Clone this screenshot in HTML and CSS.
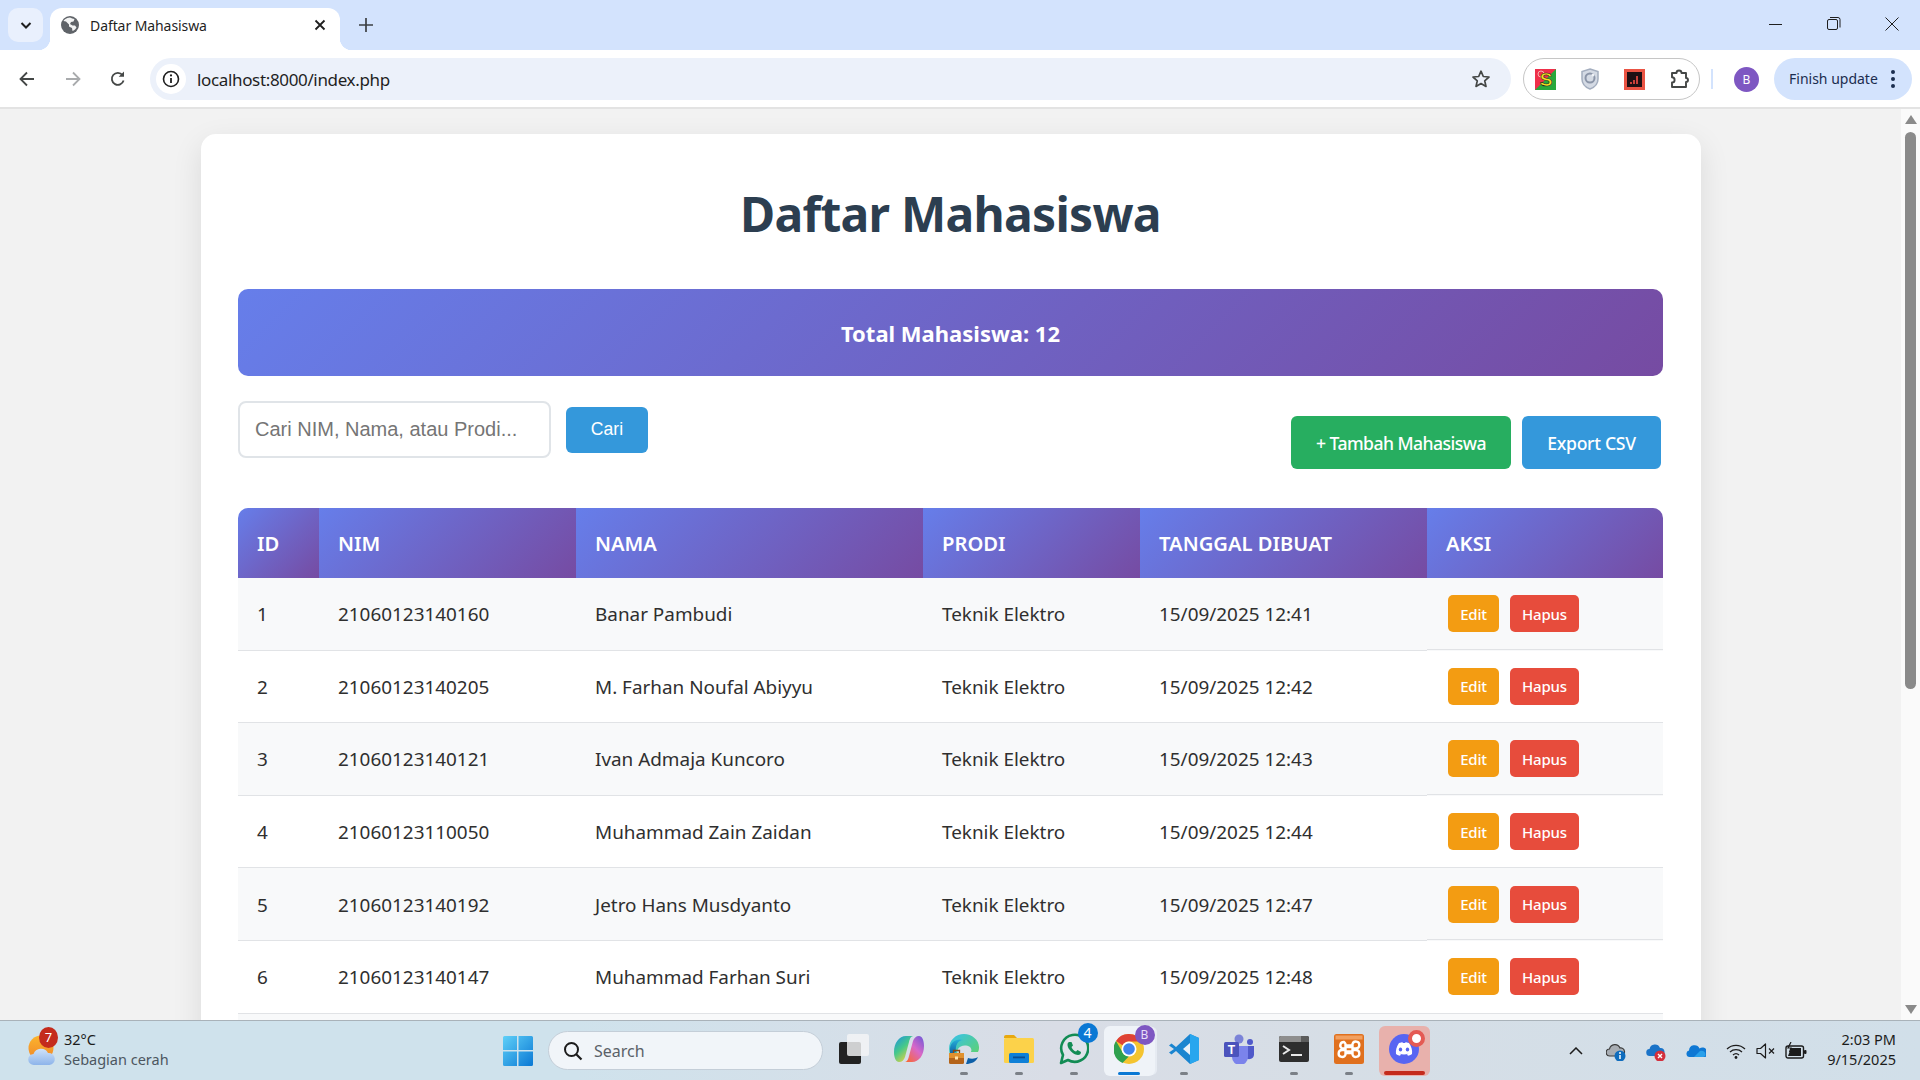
FILE: index.html
```html
<!DOCTYPE html>
<html lang="en">
<head>
  <meta charset="UTF-8" />
  <title>Daftar Mahasiswa</title>
  <link rel="stylesheet" href="styles.css">
</head>
<body>

  <!-- tab strip -->
  <header class="tabstrip">
    <div class="tab-search">
      <svg width="16" height="16" viewBox="0 0 16 16"><path d="M3.500 6 8 10.500 12.500 6" fill="none" stroke="#1f1f1f" stroke-width="2"/></svg>
    </div>
    <div class="tab">
      <svg width="18" height="18" viewBox="0 0 18 18"><circle cx="9" cy="9" r="9" fill="#5f6368"/><path d="M9 1.500c1.500 1 3 1 4.500 1.500l-1 2.500-2.500.5-1 2 2.500 1.500 2.500 0 1.500 2c-1 2-2.500 3-4 3.500l-.5-3-3-1.500 0-2-3-3-2.500-.5C3 4 5 2 9 1.500z" fill="#fff" opacity=".92"/></svg>
      <span class="tab-title">Daftar Mahasiswa</span>
      <svg class="tab-close" width="12" height="12" viewBox="0 0 12 12"><path d="M1.500 1.500 10.500 10.500M10.500 1.500 1.500 10.500" stroke="#1f1f1f" stroke-width="1.800"/></svg>
    </div>
    <svg class="tab-new" width="14" height="14" viewBox="0 0 14 14"><path d="M7 0v14M0 7h14" stroke="#3c4043" stroke-width="1.700"/></svg>
    <div class="window-controls">
      <svg width="14" height="14" viewBox="0 0 14 14"><path d="M0 7.500h13" stroke="#1f1f1f"/></svg>
      <svg width="14" height="14" viewBox="0 0 14 14"><rect x=".5" y="2.500" width="10" height="10" rx="1.500" fill="none" stroke="#1f1f1f"/><path d="M3 .5h8a2 2 0 0 1 2 2v8" fill="none" stroke="#1f1f1f"/></svg>
      <svg width="14" height="14" viewBox="0 0 14 14"><path d="M.5.5l13 13M13.500.5l-13 13" stroke="#1f1f1f"/></svg>
    </div>
  </header>

  <!-- toolbar -->
  <nav class="toolbar">
    <div class="nav-buttons">
      <svg width="18" height="18" viewBox="0 0 18 18"><path d="M16 9H3M9 2.500 2.500 9 9 15.500" fill="none" stroke="#444746" stroke-width="1.800"/></svg>
      <svg width="18" height="18" viewBox="0 0 18 18"><path d="M2 9h13M9 2.500 15.500 9 9 15.500" fill="none" stroke="#a9abad" stroke-width="1.800"/></svg>
      <svg width="18" height="18" viewBox="0 0 18 18"><path d="M14.600 10.500A6 6 0 1 1 13.500 5" fill="none" stroke="#444746" stroke-width="1.800"/><path d="M15 1.500v5.300H9.700z" fill="#444746"/></svg>
    </div>
    <div class="omnibox">
      <span class="site-info">
        <svg width="18" height="18" viewBox="0 0 18 18"><circle cx="9" cy="9" r="7.500" fill="none" stroke="#1f1f1f" stroke-width="1.600"/><path d="M9 8v5" stroke="#1f1f1f" stroke-width="1.800"/><circle cx="9" cy="5.400" r="1.100" fill="#1f1f1f"/></svg>
      </span>
      <span class="url">localhost:8000/index.php</span>
      <svg class="star" width="20" height="20" viewBox="0 0 20 20"><path d="M10 2.200l2.300 5.300 5.700.5-4.300 3.800 1.300 5.600L10 14.500l-5 2.900 1.300-5.600L2 8l5.700-.5z" fill="none" stroke="#444746" stroke-width="1.700" stroke-linejoin="round"/></svg>
    </div>
    <div class="extensions">
      <svg width="21" height="21" viewBox="0 0 21 21"><defs><linearGradient id="extS" x1="0" y1="0" x2="1" y2="1"><stop offset=".48" stop-color="#ef2f4a"/><stop offset=".52" stop-color="#27a83c"/></linearGradient></defs><rect width="21" height="21" fill="url(#extS)"/><circle cx="6" cy="5" r="3" fill="none" stroke="#f5b0b0"/><text x="11" y="17" class="ext-s">S</text></svg>
      <svg width="18" height="22" viewBox="0 0 18 22"><path d="M9 1l8 2.500v7.500c0 5-4 8.500-8 10-4-1.500-8-5-8-10V3.500z" fill="#d4dae4" stroke="#a4aebf" stroke-width="1.500"/><circle cx="9" cy="10" r="4.500" fill="none" stroke="#8b95a8" stroke-width="2"/><circle cx="12" cy="7" r="1.500" fill="#eef1f6"/></svg>
      <svg width="21" height="21" viewBox="0 0 21 21"><rect width="21" height="21" fill="#ea5444"/><rect x="3" y="3" width="15" height="15" fill="#1e1014"/><path d="M6 13h2v2H6zM9 11h2v4H9zM12 7h2v8h-2z" fill="#c8403a"/></svg>
      <svg width="22" height="22" viewBox="0 0 22 22"><path d="M3 5h4.500a2.500 2.500 0 0 1 5 0H17v5a2 2 0 0 1 0 4v5H3v-4.500a2.600 2.600 0 0 0 0-5.200z" fill="none" stroke="#444746" stroke-width="1.900" stroke-linejoin="round"/></svg>
    </div>
    <span class="toolbar-sep"></span>
    <span class="avatar">B</span>
    <div class="update-pill">
      <span class="update-label">Finish update</span>
      <svg width="4" height="18" viewBox="0 0 4 18"><circle cx="2" cy="2" r="2" fill="#1b2d4f"/><circle cx="2" cy="9" r="2" fill="#1b2d4f"/><circle cx="2" cy="16" r="2" fill="#1b2d4f"/></svg>
    </div>
  </nav>

  <!-- page -->
  <div class="viewport">
    <main class="page">
      <section class="card">
        <h1>Daftar Mahasiswa</h1>
        <div class="stats">Total Mahasiswa: 12</div>

        <div class="controls">
          <form class="search-form">
            <input type="text" placeholder="Cari NIM, Nama, atau Prodi...">
            <button type="button" class="btn-search">Cari</button>
          </form>
          <div class="control-actions">
            <a class="btn btn-add">+ Tambah Mahasiswa</a>
            <a class="btn btn-export">Export CSV</a>
          </div>
        </div>

        <table>
          <colgroup>
            <col class="col-id"><col class="col-nim"><col class="col-nama"><col class="col-prodi"><col class="col-date"><col class="col-aksi">
          </colgroup>
          <thead>
            <tr><th>ID</th><th>NIM</th><th>Nama</th><th>Prodi</th><th>Tanggal Dibuat</th><th>Aksi</th></tr>
          </thead>
          <tbody>
            <tr><td>1</td><td>21060123140160</td><td>Banar Pambudi</td><td>Teknik Elektro</td><td>15/09/2025 12:41</td><td class="cell-actions"><a class="mini mini-edit">Edit</a><a class="mini mini-del">Hapus</a></td></tr>
            <tr><td>2</td><td>21060123140205</td><td>M. Farhan Noufal Abiyyu</td><td>Teknik Elektro</td><td>15/09/2025 12:42</td><td class="cell-actions"><a class="mini mini-edit">Edit</a><a class="mini mini-del">Hapus</a></td></tr>
            <tr><td>3</td><td>21060123140121</td><td>Ivan Admaja Kuncoro</td><td>Teknik Elektro</td><td>15/09/2025 12:43</td><td class="cell-actions"><a class="mini mini-edit">Edit</a><a class="mini mini-del">Hapus</a></td></tr>
            <tr><td>4</td><td>21060123110050</td><td>Muhammad Zain Zaidan</td><td>Teknik Elektro</td><td>15/09/2025 12:44</td><td class="cell-actions"><a class="mini mini-edit">Edit</a><a class="mini mini-del">Hapus</a></td></tr>
            <tr><td>5</td><td>21060123140192</td><td>Jetro Hans Musdyanto</td><td>Teknik Elektro</td><td>15/09/2025 12:47</td><td class="cell-actions"><a class="mini mini-edit">Edit</a><a class="mini mini-del">Hapus</a></td></tr>
            <tr><td>6</td><td>21060123140147</td><td>Muhammad Farhan Suri</td><td>Teknik Elektro</td><td>15/09/2025 12:48</td><td class="cell-actions"><a class="mini mini-edit">Edit</a><a class="mini mini-del">Hapus</a></td></tr>
            <tr><td></td><td></td><td></td><td></td><td></td><td></td></tr>
          </tbody>
        </table>
      </section>
    </main>
    <aside class="scrollbar">
      <svg width="12" height="9" viewBox="0 0 12 9"><path d="M6 0l6 9H0z" fill="#8a8a8a"/></svg>
      <div class="thumb"></div>
      <svg class="arrow-down" width="12" height="9" viewBox="0 0 12 9"><path d="M6 9l6-9H0z" fill="#8a8a8a"/></svg>
    </aside>
  </div>

  <!-- windows taskbar -->
  <footer class="taskbar">
    <div class="weather">
      <span class="weather-icon">
        <svg width="30" height="32" viewBox="0 0 30 32"><defs><linearGradient id="sun" x1="0" y1="0" x2="0" y2="1"><stop offset="0" stop-color="#fbb52d"/><stop offset="1" stop-color="#f0862a"/></linearGradient><linearGradient id="cloud" x1="0" y1="0" x2="0" y2="1"><stop offset="0" stop-color="#cfe2fa"/><stop offset="1" stop-color="#8db4ea"/></linearGradient></defs><circle cx="14" cy="14" r="12.500" fill="url(#sun)"/><path d="M7 31a5.500 5.500 0 0 1-.5-11A8 8 0 0 1 21 19a6 6 0 0 1 1.500 12z" fill="url(#cloud)"/></svg>
        <b class="weather-badge">7</b>
      </span>
      <div class="weather-text">
        <span>32°C</span>
        <span class="weather-desc">Sebagian cerah</span>
      </div>
    </div>

    <div class="task-center">
      <svg class="win-logo" width="30" height="30" viewBox="0 0 30 30"><defs><linearGradient id="win" x1="0" y1="0" x2="1" y2="1"><stop offset="0" stop-color="#5fd0f8"/><stop offset="1" stop-color="#0a78d4"/></linearGradient></defs><path d="M0 1.500a1.500 1.500 0 0 1 1.500-1.500H14v14H0zM15.500 0H28.500A1.500 1.500 0 0 1 30 1.500V14H15.500zM0 15.500h14V30H1.500A1.500 1.500 0 0 1 0 28.500zM15.500 15.500H30V28.500a1.500 1.500 0 0 1-1.500 1.500H15.500z" fill="url(#win)"/></svg>
      <div class="task-search">
        <svg width="20" height="20" viewBox="0 0 20 20"><circle cx="8.500" cy="8.500" r="6.500" fill="none" stroke="#1c1c1c" stroke-width="2"/><path d="M13 13l5.500 5.500" stroke="#1c1c1c" stroke-width="2.200"/></svg>
        <span>Search</span>
      </div>

      <div class="task-apps">
        <!-- task view -->
        <span class="app">
          <svg width="30" height="30" viewBox="0 0 30 30"><rect y="8" width="22" height="22" rx="2" fill="#222"/><rect x="8" y="0" width="22" height="22" rx="2" fill="#f4f5f7" opacity=".82"/></svg>
        </span>
        <!-- copilot -->
        <span class="app">
          <svg width="30" height="28" viewBox="0 0 30 28"><defs><linearGradient id="copL" x1="0" y1="0" x2=".7" y2="1"><stop offset="0" stop-color="#1a8fe3"/><stop offset=".5" stop-color="#46c98a"/><stop offset="1" stop-color="#f8d23a"/></linearGradient><linearGradient id="copR" x1="1" y1="0" x2=".2" y2="1"><stop offset="0" stop-color="#6a58d8"/><stop offset=".5" stop-color="#d868c8"/><stop offset="1" stop-color="#f8683a"/></linearGradient></defs><path d="M18 27h-8c3 0 4-2 5-6l4-15c1-3 3-5 6-5 3 0 5 4 5 10 0 9-5 16-12 16z" fill="url(#copR)"/><path d="M12 1h8c-3 0-4 2-5 6l-4 15c-1 3-3 5-6 5C2 27 0 23 0 17 0 8 5 1 12 1z" fill="url(#copL)"/></svg>
        </span>
        <!-- edge work -->
        <span class="app has-pip">
          <svg width="30" height="30" viewBox="0 0 30 30"><defs><linearGradient id="edgeB" x1="0" y1="0" x2="0" y2="1"><stop offset="0" stop-color="#27b0d8"/><stop offset="1" stop-color="#0c5fa8"/></linearGradient><linearGradient id="edgeG" x1="0" y1="0" x2="1" y2="1"><stop offset="0" stop-color="#35c1f1"/><stop offset="1" stop-color="#66d45c"/></linearGradient></defs><path d="M15 0C7 0 0 6 0 15c0 5 2 9 6 12h8C9 24 7 19 9 15c2-3 7-5 12-2 1 1 2 3 1 5h7c1-2 1-4 1-5C30 6 23 0 15 0z" fill="url(#edgeG)"/><path d="M1 15C1 8 8 4 14 6c-5 0-8 5-7 12l-6 2z" fill="url(#edgeB)"/><path d="M17 30c5 0 10-2 12-7-3 2-7 2-10 1z" fill="#0c5fa8"/><rect x="0" y="19" width="15" height="11" rx="1.500" fill="#b4641a"/><rect x="0" y="19" width="15" height="5" fill="#e0912e"/><rect x="6" y="22.500" width="3" height="3" fill="#ffe3a8"/><path d="M4.500 19v-2.500h6V19" fill="none" stroke="#8a4a10" stroke-width="1.300"/></svg>
        </span>
        <!-- file explorer -->
        <span class="app has-pip">
          <svg width="30" height="30" viewBox="0 0 30 30"><path d="M0 3a2 2 0 0 1 2-2h8l3 3h-13z" fill="#e8a80e"/><rect y="4" width="30" height="25" rx="1.500" fill="#fcd24a"/><rect x="5" y="19" width="20" height="10" rx="1.500" fill="#0f80d7"/><rect x="9" y="22.500" width="12" height="1.800" fill="#0a4f92"/></svg>
        </span>
        <!-- whatsapp -->
        <span class="app has-pip">
          <svg width="30" height="32" viewBox="0 0 30 32"><path d="M2 30l2-8A13.500 13.500 0 1 1 9 27z" fill="#f4f8f6" fill-opacity=".25" stroke="#128c54" stroke-width="2.600" stroke-linejoin="round"/><path d="M10 9c-2 1-2 4 0 7s6 6 9 6c2 0 3-1 3-3l-3.500-2-1.500 1.500c-2-.5-3.500-2-4.500-4.500l1.500-1.500-1.500-3.500z" fill="#128c54"/></svg>
          <b class="badge-count">4</b>
        </span>
        <!-- chrome -->
        <span class="app app-active">
          <svg width="30" height="30" viewBox="0 0 30 30"><circle cx="15" cy="15" r="15" fill="#f4c430"/><path d="M15 0a15 15 0 0 1 13 7.500H15a7.500 7.500 0 0 0-6.500 3.700L2 7A15 15 0 0 1 15 0z" fill="#df4236"/><path d="M2 7l6.500 11.300a7.500 7.500 0 0 0 6.500 4L8.500 29A15 15 0 0 1 2 7z" fill="#2fa14f"/><circle cx="15" cy="15" r="7.500" fill="#fff"/><circle cx="15" cy="15" r="5.800" fill="#3f83ee"/></svg>
          <b class="badge-profile">B</b>
        </span>
        <!-- vs code -->
        <span class="app has-pip">
          <svg width="30" height="30" viewBox="0 0 30 30"><path d="M21 0l9 4v22l-9 4L7 17l-4.500 3.500L0 18.500 5 15 0 11.500 2.500 9.500 7 13z" fill="#1a85d0"/><path d="M21 0l9 4v22l-9 4z" fill="#28a6ee"/><path d="M21 9l-7 6 7 6z" fill="#e8f1f9"/></svg>
        </span>
        <!-- teams -->
        <span class="app">
          <svg width="30" height="30" viewBox="0 0 30 30"><circle cx="15" cy="5" r="4.500" fill="#7b83d8"/><circle cx="26" cy="8" r="3" fill="#5059c9"/><path d="M21 12h9v9a5 5 0 0 1-9 2z" fill="#5059c9"/><path d="M8 12h16v11a8 8 0 0 1-16 0z" fill="#7b83eb"/><rect x="0" y="8" width="15" height="15" rx="1.500" fill="#4b53bc"/><text x="7.500" y="20" class="teams-t">T</text></svg>
        </span>
        <!-- terminal -->
        <span class="app has-pip">
          <svg width="30" height="26" viewBox="0 0 30 26"><rect width="30" height="26" rx="2" fill="#2e2e2e"/><path d="M0 2a2 2 0 0 1 2-2h20v6H0z" fill="#8e8e8e"/><path d="M22 0h6a2 2 0 0 1 2 2v4h-8z" fill="#5c5c5c"/><path d="M4 10l6 4-6 4" fill="none" stroke="#e8e8e8" stroke-width="2"/><path d="M12 19h11" stroke="#e8e8e8" stroke-width="2"/></svg>
        </span>
        <!-- xampp -->
        <span class="app has-pip">
          <svg width="30" height="30" viewBox="0 0 30 30"><rect width="30" height="30" rx="2.500" fill="#e0701e"/><rect x="1.500" y="1.500" width="27" height="4" fill="#f2a060"/><path d="M10 8a3.500 3.500 0 0 0-2 6.500h3.500V13l7 0v1.500H22A3.500 3.500 0 1 0 18.500 10v1.500h-7V10A3.500 3.500 0 0 0 10 8zM11.500 16v1.500h7V16H22a3.500 3.500 0 1 1-3.500 4.500V19h-7v1.500A3.500 3.500 0 1 1 8 16z" fill="none" stroke="#fff" stroke-width="2.400"/></svg>
        </span>
        <!-- discord -->
        <span class="app app-alert">
          <svg width="30" height="30" viewBox="0 0 30 30"><circle cx="15" cy="15" r="15" fill="#5865f2"/><path d="M10 9c1.500-.6 3-.8 3.500-.8l.4.8h2.200l.4-.8c.5 0 2 .2 3.500.8 2.500 3.500 3.500 7.500 3 11-1.500 1-3 1.500-4 1.700l-1-1.500c.7-.2 1.200-.5 1.700-.8-3 1.300-6.400 1.300-9.400 0 .5.3 1 .6 1.700.8l-1 1.500c-1-.2-2.500-.7-4-1.700-.5-3.500.5-7.500 3-11z" fill="#fff"/><ellipse cx="11.500" cy="15.500" rx="1.700" ry="1.900" fill="#5865f2"/><ellipse cx="18.500" cy="15.500" rx="1.700" ry="1.900" fill="#5865f2"/></svg>
          <i class="alert-dot"></i>
        </span>
      </div>
    </div>

    <div class="tray">
      <svg class="tray-chevron" width="14" height="8" viewBox="0 0 14 8"><path d="M1 7l6-6 6 6" fill="none" stroke="#1c1c1c" stroke-width="1.500"/></svg>
      <span class="tray-icon">
        <svg width="20" height="20" viewBox="0 0 20 20"><path d="M4 15a3.500 3.500 0 0 1-.5-7A5.500 5.500 0 0 1 14 7a4 4 0 0 1 1 8z" fill="#a8adb3" stroke="#3c3c3c" stroke-width="1.200"/><circle cx="14" cy="15" r="5.500" fill="#0f6cbd"/><path d="M14 14v4" stroke="#fff" stroke-width="1.500"/><circle cx="14" cy="12" r="1" fill="#fff"/></svg>
      </span>
      <span class="tray-icon">
        <svg width="20" height="20" viewBox="0 0 20 20"><path d="M4 15a3.500 3.500 0 0 1-.5-7A5.500 5.500 0 0 1 14 7a4 4 0 0 1 1 8z" fill="#1a73c8"/><circle cx="14" cy="15" r="5.500" fill="#d32f3c"/><path d="M12 13l4 4M16 13l-4 4" stroke="#fff" stroke-width="1.400"/></svg>
      </span>
      <span class="tray-icon">
        <svg width="20" height="14" viewBox="0 0 20 14"><path d="M3.500 13a3.300 3.300 0 0 1-.5-6.500A5.500 5.500 0 0 1 13.500 4.500 4.500 4.500 0 0 1 19.500 13z" fill="#0f78d4"/><path d="M8 13l6-6c2.500-1 5.500.5 5.500 3.500 0 1.500-1 2.500-2.500 2.500z" fill="#2aa0ea"/></svg>
      </span>
      <span class="tray-icon tray-small tray-wifi">
        <svg width="20" height="16" viewBox="0 0 20 16"><path d="M1 6a13 13 0 0 1 18 0M4 9a9 9 0 0 1 12 0M7 12a4.500 4.500 0 0 1 6 0" fill="none" stroke="#1c1c1c" stroke-width="1.300"/><circle cx="10" cy="14.500" r="1.400" fill="#1c1c1c"/></svg>
      </span>
      <span class="tray-icon tray-small">
        <svg width="20" height="16" viewBox="0 0 20 16"><path d="M1 5.500h3.500L9.500 1v14L4.500 10.500H1z" fill="none" stroke="#1c1c1c" stroke-width="1.200" stroke-linejoin="round"/><path d="M13 5.500l5 5M18 5.500l-5 5" stroke="#1c1c1c" stroke-width="1.200"/></svg>
      </span>
      <span class="tray-icon tray-small">
        <svg width="22" height="18" viewBox="0 0 22 18"><rect x="1" y="4" width="17.500" height="12" rx="2" fill="none" stroke="#1c1c1c" stroke-width="1.400"/><path d="M3 14l3-8h10v8z" fill="#1c1c1c"/><rect x="19" y="8" width="2.500" height="4" rx="1" fill="#1c1c1c"/><path d="M6 0L3 6h3L4.500 10" fill="none" stroke="#1c1c1c" stroke-width="1.200"/></svg>
      </span>
      <div class="clock">
        <span>2:03 PM</span>
        <span>9/15/2025</span>
      </div>
    </div>
  </footer>

</body>
</html>
```

FILE: styles.css
```css
* {
  box-sizing: border-box;
}

html, body {
  height: 100%;
}

body {
  margin: 0;
  display: flex;
  flex-direction: column;
  overflow: hidden;
  font-family: "Noto Sans", sans-serif;
  color: #1f1f1f;
}

svg {
  display: block;
  flex: none;
}

/* ---- browser chrome ---- */

.tabstrip {
  height: 50px;
  flex: none;
  background: #d3e3fd;
  display: flex;
  align-items: flex-start;
  padding: 8px 0 0 8px;
}

.tab-search {
  width: 35px;
  height: 34px;
  background: #e9f0fd;
  border-radius: 10px;
  display: flex;
  align-items: center;
  justify-content: center;
}

.tab {
  position: relative;
  width: 290px;
  height: 42px;
  margin-left: 7px;
  background: #fff;
  border-radius: 12px 12px 0 0;
  display: flex;
  align-items: center;
  padding: 0 14px 8px 11px;
}

.tab::before,
.tab::after {
  content: "";
  position: absolute;
  bottom: 0;
  width: 12px;
  height: 12px;
}

.tab::before {
  left: -12px;
  background: radial-gradient(circle at 0 0, transparent 12px, #fff 12.500px);
}

.tab::after {
  right: -12px;
  background: radial-gradient(circle at 100% 0, transparent 12px, #fff 12.500px);
}

.tab-title {
  margin-left: 11px;
  font-size: 14px;
  letter-spacing: -0.08px;
  color: #1f1f1f;
  flex: 1;
}

.tab-new {
  margin: 10px 0 0 19px;
}

.window-controls {
  margin-left: auto;
  display: flex;
  gap: 44px;
  padding: 9px 21px 0 0;
}

.toolbar {
  height: 59px;
  flex: none;
  background: #fff;
  border-bottom: 2px solid #e3e3e3;
  border-radius: 12px 12px 0 0;
  display: flex;
  align-items: center;
  padding: 1px 8px 0 18px;
}

.nav-buttons {
  display: flex;
  gap: 27.500px;
  width: 132px;
}

.omnibox {
  width: 1361px;
  height: 42px;
  background: #ecf1fa;
  border-radius: 21px;
  display: flex;
  align-items: center;
  padding: 0 20px 0 6px;
}

.site-info {
  width: 30px;
  height: 30px;
  border-radius: 50%;
  background: #fff;
  display: flex;
  align-items: center;
  justify-content: center;
}

.url {
  margin-left: 11px;
  font-size: 17px;
  letter-spacing: -0.35px;
  color: #1f1f1f;
}

.star {
  margin-left: auto;
}

.extensions {
  width: 177px;
  height: 42px;
  margin-left: 12px;
  border: 1px solid #c6c6c6;
  border-radius: 21px;
  display: grid;
  grid-template-columns: 43px repeat(3, 45px);
  align-items: center;
  justify-items: center;
}

.ext-s {
  font-family: "Liberation Sans", sans-serif;
  font-size: 19px;
  font-weight: 700;
  text-anchor: middle;
  fill: #f5e020;
  stroke: #222;
  stroke-width: .6px;
}

.toolbar-sep {
  width: 2px;
  height: 20px;
  margin-left: 11px;
  background: #d3e3fd;
}

.avatar {
  width: 25px;
  height: 25px;
  margin-left: 21px;
  border-radius: 50%;
  background: #7e57c2;
  color: #fff;
  font-size: 12px;
  display: flex;
  align-items: center;
  justify-content: center;
}

.update-pill {
  width: 138px;
  height: 42px;
  margin-left: 15px;
  background: #d3e3fd;
  border-radius: 21px;
  display: flex;
  align-items: center;
  justify-content: space-between;
  padding: 0 17px 0 15px;
  font-size: 14px;
  color: #1b2d4f;
}

.update-label {
  margin-bottom: 2px;
}

/* ---- page ---- */

.viewport {
  flex: 1;
  min-height: 0;
  display: flex;
}

.page {
  flex: 1;
  overflow: hidden;
  background: #f2f2f2;
  padding: 25px 0 0 201px;
}

.card {
  width: 1500px;
  background: #fff;
  border-radius: 15px;
  box-shadow: 0 10px 30px rgba(0,0,0,0.1);
  padding: 37px 38px 37px 37px;
}

h1 {
  margin: 0 0 33px;
  text-align: center;
  font-size: 48px;
  line-height: 85px;
  height: 85px;
  font-weight: 700;
  letter-spacing: -0.72px;
  color: #2c3e50;
}

.stats {
  height: 87px;
  background: linear-gradient(135deg, #667eea, #764ba2);
  border-radius: 10px;
  color: #fff;
  font-size: 22px;
  font-weight: 700;
  display: flex;
  align-items: center;
  justify-content: center;
}

.controls {
  height: 132px;
  padding-top: 25px;
  display: flex;
  justify-content: space-between;
  align-items: flex-start;
}

.search-form {
  display: flex;
  align-items: center;
  gap: 15px;
}

.search-form input {
  width: 313px;
  height: 57px;
  padding: 0 15px;
  border: 2px solid #e0e4e8;
  border-radius: 8px;
  font-family: "Liberation Sans", sans-serif;
  font-size: 20px;
  outline: none;
}

.search-form input::placeholder {
  color: #757575;
}

.btn-search {
  width: 82px;
  height: 46px;
  border: none;
  border-radius: 6px;
  background: #3498db;
  color: #fff;
  font-family: "Liberation Sans", sans-serif;
  font-size: 17.600px;
}

.control-actions {
  display: flex;
  gap: 11px;
  padding: 15px 2px 0 0;
}

.btn {
  height: 53px;
  border-radius: 6px;
  color: #fff;
  font-size: 17.600px;
  font-weight: 500;
  letter-spacing: -0.3px;
  display: flex;
  align-items: center;
  justify-content: center;
}

.btn-add {
  width: 220px;
  letter-spacing: -0.55px;
  background: #27ae60;
}

.btn-export {
  width: 139px;
  background: #3498db;
}

table {
  width: 1425px;
  border-collapse: separate;
  border-spacing: 0;
  table-layout: fixed;
  border-radius: 10px;
  overflow: hidden;
}

.col-id { width: 81px; }
.col-nim { width: 257px; }
.col-nama { width: 347px; }
.col-prodi { width: 217px; }
.col-date { width: 287px; }
.col-aksi { width: 236px; }

th {
  height: 70px;
  padding: 0 19px;
  background: linear-gradient(135deg, #667eea, #764ba2);
  color: #fff;
  text-align: left;
  text-transform: uppercase;
  font-size: 20.200px;
  font-weight: 600;
}

td {
  height: 72.600px;
  padding: 1px 19px 0;
  border-bottom: 1px solid #e1e3e6;
  font-size: 18.900px;
  color: #2f2f2f;
}

tbody tr:nth-child(odd) {
  background: #f8f9fa;
}

/* the line under these cells sits a pixel higher on the shaded rows */
tbody tr:nth-child(odd) .cell-actions {
  border-bottom-color: transparent;
  box-shadow: inset 0 -1px 0 #e1e3e6;
}

td.cell-actions {
  padding: 0 19px 0 21px;
}

.mini {
  display: inline-flex;
  align-items: center;
  justify-content: center;
  height: 37px;
  border-radius: 5px;
  color: #fff;
  font-size: 15px;
  font-weight: 500;
  letter-spacing: -0.2px;
  vertical-align: middle;
}

.mini-edit {
  width: 51px;
  background: #f39c12;
}

.mini-del {
  width: 69px;
  margin-left: 11px;
  background: #e74c3c;
}

.scrollbar {
  width: 19px;
  flex: none;
  background: #fafafa;
  display: flex;
  flex-direction: column;
  align-items: center;
  padding: 6px 0 6px;
}

.thumb {
  width: 11px;
  height: 557px;
  margin-top: 8px;
  background: #8a8a8a;
  border-radius: 6px;
}

.arrow-down {
  margin-top: auto;
}

/* ---- taskbar ---- */

.taskbar {
  height: 60px;
  flex: none;
  border-top: 1px solid #a9b2b9;
  background: linear-gradient(90deg, #cfe2ec 0%, #cfe2ec 30%, #d9dde6 55%, #d6dee6 70%, #d1dfe9 100%);
  display: flex;
  align-items: center;
}

.weather {
  width: 503px;
  display: flex;
  align-items: center;
  padding-left: 27px;
  flex: none;
}

.weather-icon {
  position: relative;
  width: 30px;
  height: 34px;
  display: block;
}

.weather-badge {
  position: absolute;
  top: -7px;
  left: 12px;
  width: 19px;
  height: 21px;
  border-radius: 50%;
  background: #c42b1c;
  color: #fff;
  font-size: 13px;
  font-weight: 400;
  display: flex;
  align-items: center;
  justify-content: center;
}

.weather-text {
  margin: -4px 0 0 7px;
  display: flex;
  flex-direction: column;
  gap: 2px;
  font-size: 14.500px;
  line-height: 18px;
  color: #1c1c1c;
}

.weather-desc {
  color: #4c5660;
}

.task-center {
  display: flex;
  align-items: center;
}

.win-logo {
  margin-right: 15px;
}

.task-search {
  width: 275px;
  height: 39px;
  background: #f1f5f9;
  border: 1px solid #c4ced8;
  border-radius: 20px;
  display: flex;
  align-items: center;
  padding-left: 14px;
  gap: 11px;
  font-size: 16px;
  color: #5b6168;
}

.task-apps {
  display: flex;
  gap: 4px;
  margin-left: 5.500px;
}

.app {
  position: relative;
  width: 51px;
  height: 50px;
  border-radius: 6px;
  display: flex;
  align-items: center;
  justify-content: center;
  padding-bottom: 3px;
}

.has-pip::after {
  content: "";
  position: absolute;
  left: 21px;
  bottom: 1px;
  width: 8px;
  height: 3px;
  border-radius: 2px;
  background: #7b8087;
}

.app-active {
  background: #eff3f8;
  box-shadow: 3px 0 0 -1px #e6ebf2;
}

.app-active::after {
  content: "";
  position: absolute;
  left: 14px;
  bottom: 1px;
  width: 22px;
  height: 3px;
  border-radius: 2px;
  background: #0a78d4;
}

.app-alert {
  background: #e8b1ac;
}

.app-alert::after {
  content: "";
  position: absolute;
  left: 5px;
  bottom: 1px;
  width: 41px;
  height: 4px;
  border-radius: 2px;
  background: #c42b1c;
}

.badge-count {
  position: absolute;
  top: -3px;
  right: 2px;
  width: 20px;
  height: 20px;
  border-radius: 50%;
  background: #0a78d4;
  color: #fff;
  font-size: 14px;
  font-weight: 400;
  display: flex;
  align-items: center;
  justify-content: center;
}

.badge-profile {
  position: absolute;
  top: -1px;
  right: 0;
  width: 20px;
  height: 20px;
  border-radius: 50%;
  background: #7e57c2;
  color: #e8def8;
  font-size: 12px;
  font-weight: 400;
  display: flex;
  align-items: center;
  justify-content: center;
}

.teams-t {
  font-family: "Liberation Sans", sans-serif;
  font-size: 12px;
  font-weight: 700;
  text-anchor: middle;
  fill: #fff;
}

.alert-dot {
  position: absolute;
  top: 4px;
  right: 5px;
  width: 17px;
  height: 17px;
  border-radius: 50%;
  background: #fff;
  border: 4.500px solid #e45a54;
}

.tray {
  margin-left: auto;
  display: flex;
  align-items: center;
  padding-right: 24px;
}

.tray-chevron {
  margin-right: 13px;
}

.tray-icon {
  width: 40px;
  display: flex;
  justify-content: center;
}

.tray-small {
  width: 30px;
}

.tray-wifi {
  margin-left: 5px;
}

.clock {
  margin: -4px 0 0 16px;
  display: flex;
  flex-direction: column;
  align-items: flex-end;
  gap: 2px;
  font-size: 14.500px;
  line-height: 18px;
  color: #1c1c1c;
}
```
